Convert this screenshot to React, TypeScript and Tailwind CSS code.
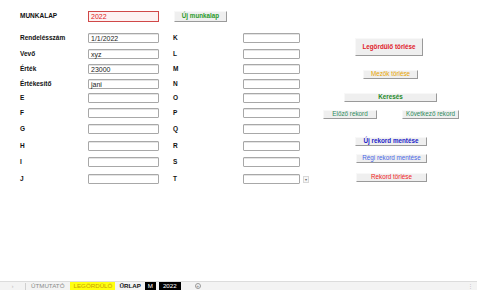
import React from "react";

const font = { fontFamily: '"Liberation Sans", Arial, sans-serif' };

type Row = { label: string; value: string; letter: string; h: string };

const rows: Row[] = [
  { label: "Rendelésszám", value: "1/1/2022", letter: "K", h: "h-[16px]" },
  { label: "Vevő", value: "xyz", letter: "L", h: "h-[15px]" },
  { label: "Érték", value: "23000", letter: "M", h: "h-[15px]" },
  { label: "Értékesítő", value: "jani", letter: "N", h: "h-[14px]" },
  { label: "E", value: "", letter: "O", h: "h-[15px]" },
  { label: "F", value: "", letter: "P", h: "h-[16px]" },
  { label: "G", value: "", letter: "Q", h: "h-[17px]" },
  { label: "H", value: "", letter: "R", h: "h-[16px]" },
  { label: "I", value: "", letter: "S", h: "h-[17px]" },
  { label: "J", value: "", letter: "T", h: "h-[10px]" },
];

function Box({ w, value }: { w: string; value?: string }) {
  return (
    <div
      className={`${w} h-[10px] border border-[#a8a8a8] rounded-[1px] bg-white flex items-center pl-[2px] text-[7px] leading-none text-[#222] shadow-[inset_0_1px_0_#e4e4e4]`}
    >
      {value}
    </div>
  );
}

function Btn({
  w,
  h = "h-[9px]",
  cls,
  children,
}: {
  w: string;
  h?: string;
  cls: string;
  children: React.ReactNode;
}) {
  return (
    <div
      className={`${w} ${h} bg-[#efefef] border-t border-l border-t-[#f8f8f8] border-l-[#f8f8f8] border-r border-b border-r-[#9a9a9a] border-b-[#9a9a9a] flex items-center justify-center text-[6.3px] leading-none whitespace-nowrap ${cls}`}
    >
      {children}
    </div>
  );
}

export default function App() {
  return (
    <div className="w-[477px] h-[290px] bg-white relative overflow-hidden flex flex-col" style={font}>
      <div className="flex flex-1">
        {/* left form */}
        <div className="w-[323px] pl-[20px] pt-[11px]">
          <div className="flex items-center h-[11px]">
            <div className="w-[68px] text-[6.5px] font-bold leading-none text-[#111]">MUNKALAP</div>
            <div className="w-[71px] h-[11px] border border-[#d04848] bg-[#fdf2f2] flex items-center pl-[2px] text-[7px] leading-none text-[#e02020]">
              2022
            </div>
            <div className="ml-[15px]">
              <Btn w="w-[53px]" h="h-[11px]" cls="text-[#2a9a2a] font-bold">
                Új munkalap
              </Btn>
            </div>
          </div>
          <div className="mt-[11px]">
            {rows.map((r) => (
              <div key={r.letter} className={`flex items-start ${r.h}`}>
                <div className="w-[68px] h-[10px] flex items-center text-[6.5px] font-bold leading-none text-[#111]">
                  {r.label}
                </div>
                <Box w="w-[71px]" value={r.value} />
                <div className="w-[70px] ml-[14px] h-[10px] flex items-center text-[6.5px] font-bold leading-none text-[#111]">
                  {r.letter}
                </div>
                <Box w="w-[57px]" />
                {r.letter === "T" && (
                  <div className="ml-[3px] mt-[2px] w-[6px] h-[7px] border border-[#d8d8d8] bg-[#f6f6f6] flex items-center justify-center text-[4px] leading-none text-[#666]">
                    ▾
                  </div>
                )}
              </div>
            ))}
          </div>
        </div>

        {/* right buttons */}
        <div className="flex flex-col items-start pt-[38px]">
          <div className="ml-[32px]">
            <Btn w="w-[68px]" h="h-[18px]" cls="text-[#e0202a] font-bold">
              Legördülő törlése
            </Btn>
          </div>
          <div className="ml-[40px] mt-[14px]">
            <Btn w="w-[55px]" cls="text-[#e8a400]">
              Mezők törlése
            </Btn>
          </div>
          <div className="ml-[21px] mt-[14px]">
            <Btn w="w-[93px]" cls="text-[#1f8a2a] font-bold">
              Keresés
            </Btn>
          </div>
          <div className="mt-[8px] flex gap-[25px]">
            <Btn w="w-[54px]" cls="text-[#2e8a5c]">
              Előző rekord
            </Btn>
            <Btn w="w-[57px]" cls="text-[#2e8a5c]">
              Következő rekord
            </Btn>
          </div>
          <div className="ml-[32px] mt-[18px]">
            <Btn w="w-[72px]" cls="text-[#2323c8] font-bold">
              Új rekord mentése
            </Btn>
          </div>
          <div className="ml-[33px] mt-[8px]">
            <Btn w="w-[71px]" cls="text-[#4a66e6]">
              Régi rekord mentése
            </Btn>
          </div>
          <div className="ml-[33px] mt-[10px]">
            <Btn w="w-[71px]" cls="text-[#f02424]">
              Rekord törlése
            </Btn>
          </div>
        </div>
      </div>

      {/* sheet tab bar */}
      <div className="h-[9px] bg-[#f3f3f3] border-t border-[#dcdcdc] flex items-end text-[6.2px] leading-none">
        <div className="w-[25px] h-[8px] flex items-center justify-center text-[#b0b0b0] text-[5px]">›</div>
        <div className="w-px h-[7px] bg-[#d0d0d0]" />
        <div className="ml-[4px] h-[8px] px-[1px] flex items-center text-[#8a8a8a]">ÚTMUTATÓ</div>
        <div className="ml-[5px] h-[8px] w-[45px] bg-[#ffff10] flex items-center justify-center text-[#c8a000]">
          LEGÖRDÜLŐ
        </div>
        <div className="ml-[4px] h-[8px] flex items-center font-bold text-[#111]">ŰRLAP</div>
        <div className="ml-[4px] h-[8px] w-[11px] bg-black text-white flex items-center justify-center">M</div>
        <div className="ml-[3px] h-[8px] w-[22px] bg-black text-white flex items-center justify-center">2022</div>
        <div className="ml-[14px] h-[8px] flex items-center">
          <div className="w-[6px] h-[6px] rounded-full border border-[#9a9a9a] flex items-center justify-center text-[5px] text-[#888]">
            +
          </div>
        </div>
        <div className="flex-1" />
        <div className="mr-[4px] h-[8px] flex items-center text-[#bbb] text-[5px]">⋮</div>
      </div>
    </div>
  );
}
